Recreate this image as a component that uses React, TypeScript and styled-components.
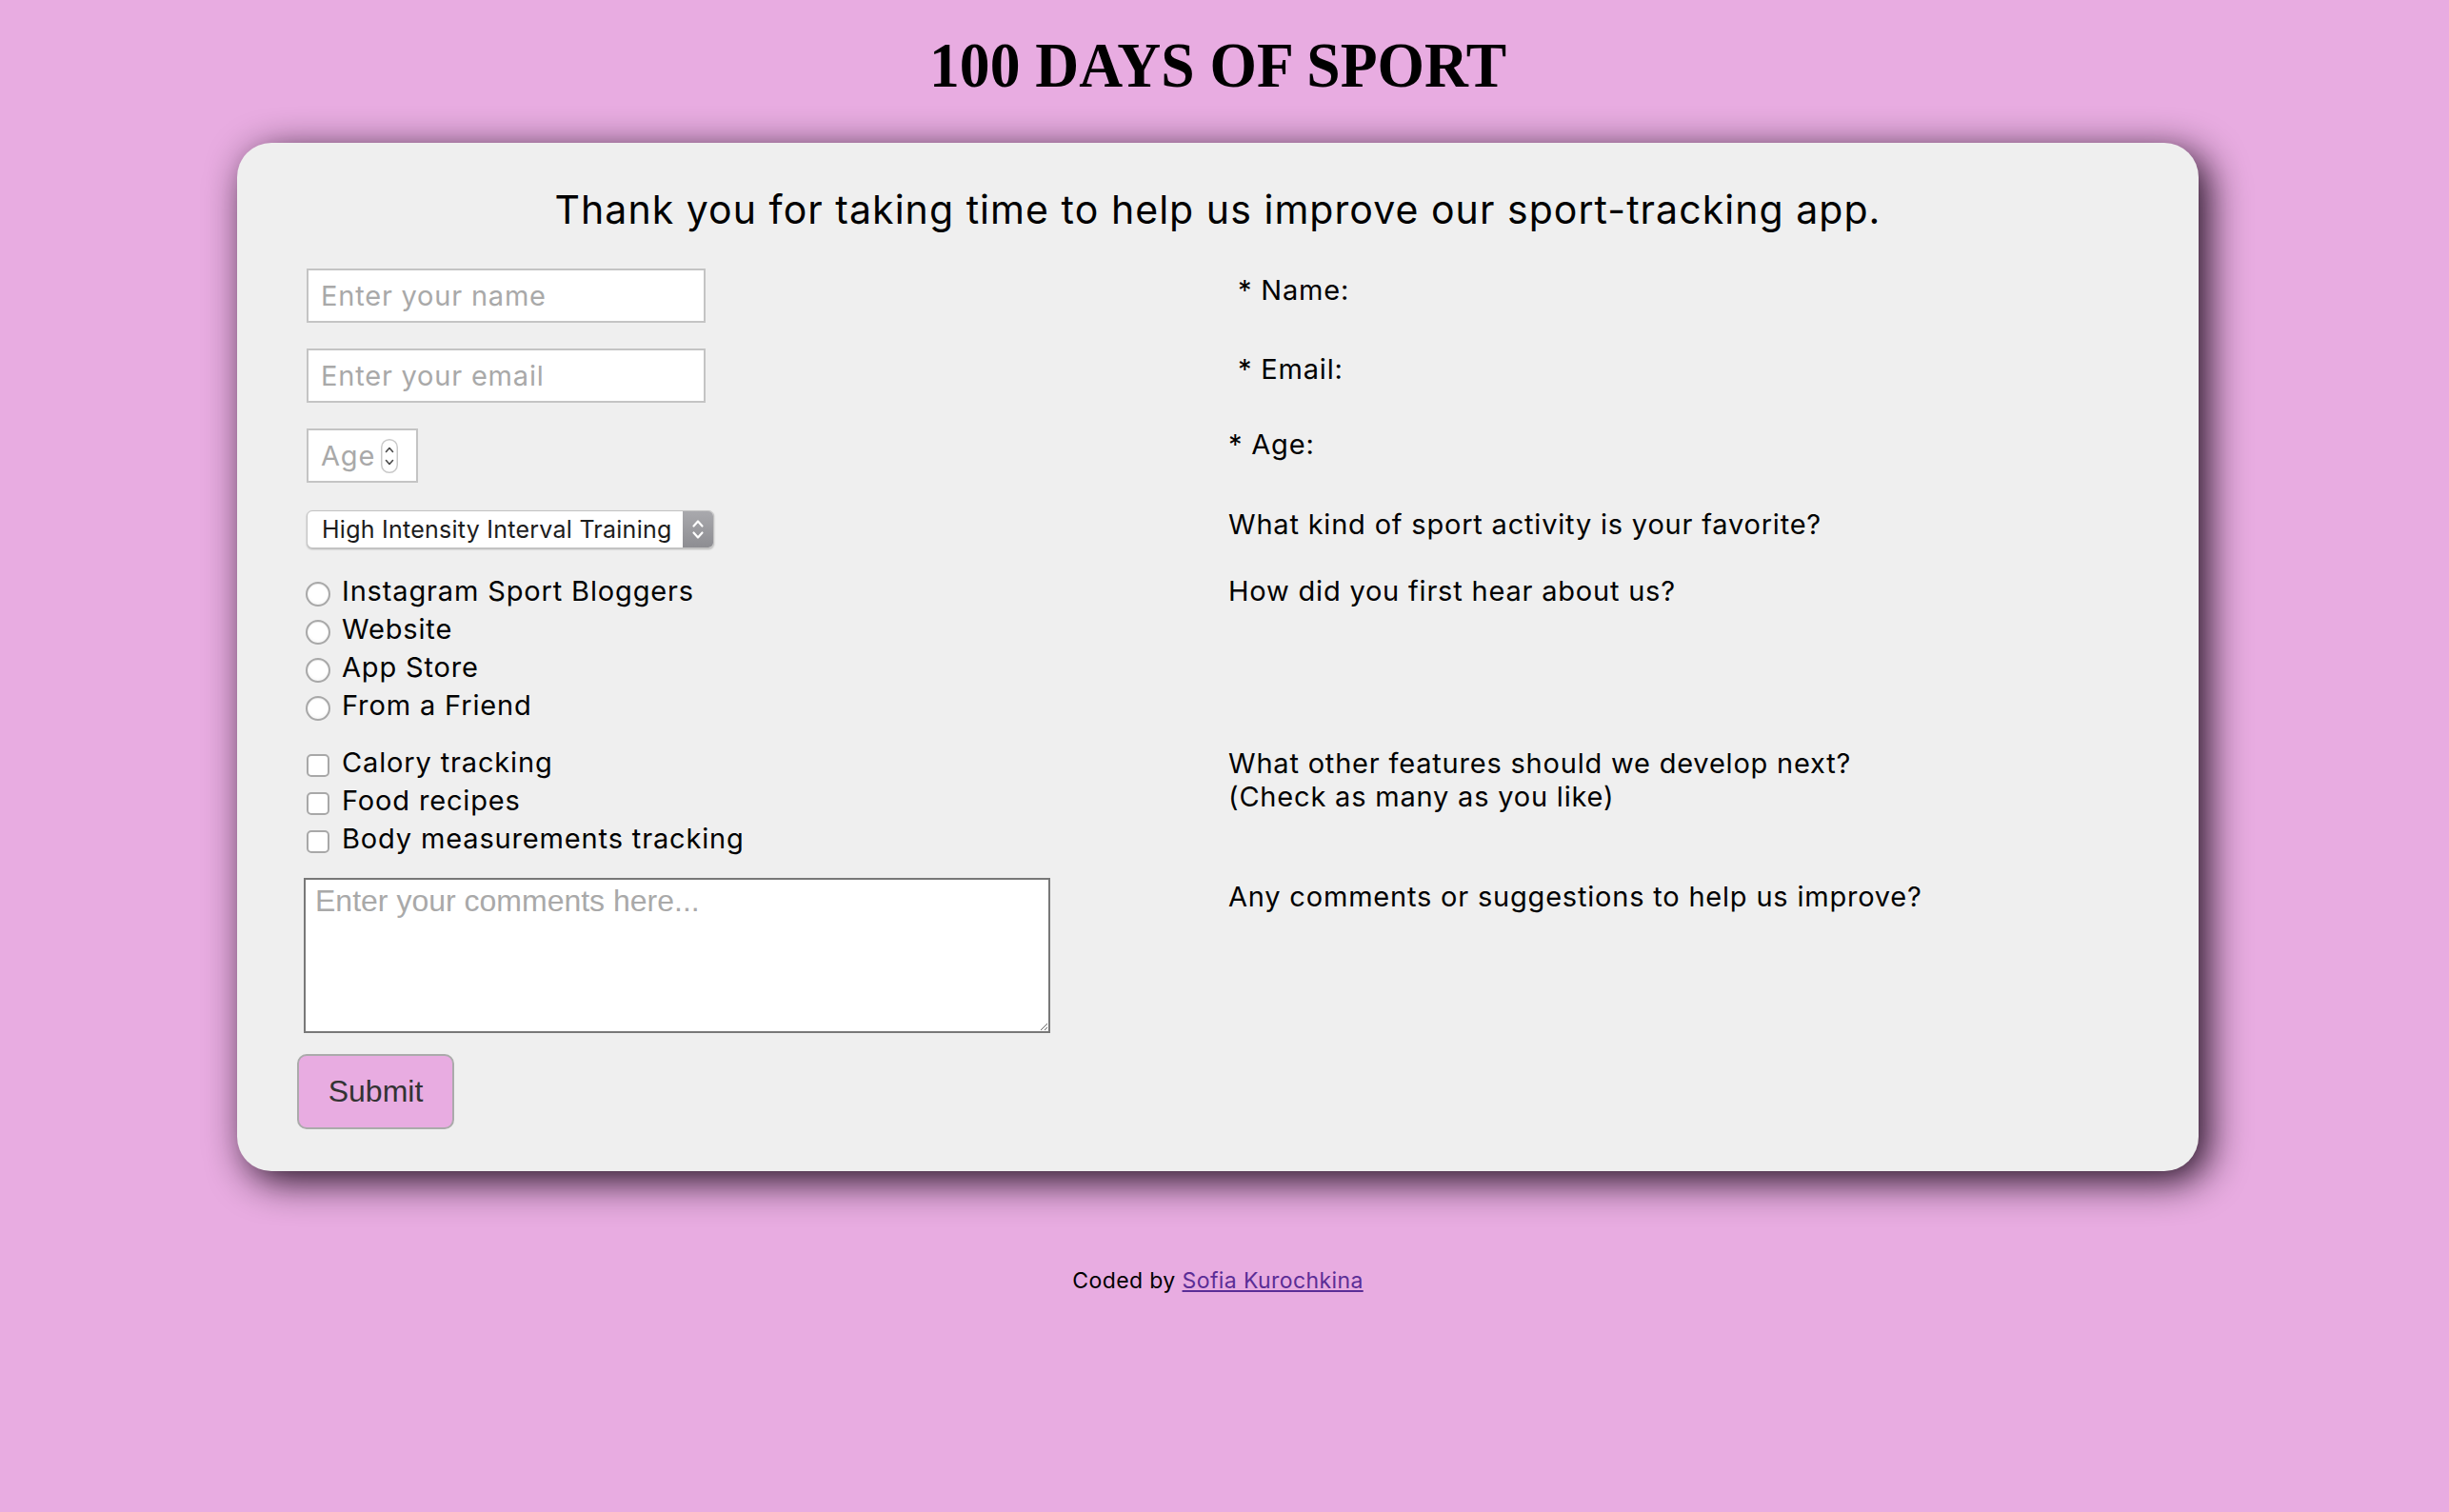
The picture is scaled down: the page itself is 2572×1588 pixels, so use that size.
import React from "react";
import styled, { createGlobalStyle } from "styled-components";

const Global = createGlobalStyle`
  html, body {
    margin: 0;
    padding: 0;
    background: #e8ace1;
  }
  body {
    font-family: Inter, "Noto Sans", sans-serif;
    color: #000;
  }
`;

const Page = styled.div`
  width: 2558px;
  min-height: 1588px;
  box-sizing: border-box;
  padding-top: 29px;
  display: flex;
  flex-direction: column;
  align-items: center;
`;

const Title = styled.h1`
  margin: 0;
  font-family: "Liberation Serif", "Times New Roman", serif;
  font-weight: 700;
  font-size: 68px;
  line-height: 78px;
  transform: scaleX(0.935);
  color: #000;
`;

const Card = styled.main`
  margin-top: 43px;
  width: 2060px;
  box-sizing: border-box;
  padding: 45px 73px 44px;
  background: #efefef;
  border-radius: 36px;
  box-shadow: 10px 10px 40px rgba(20, 5, 20, 0.95);
`;

const Lead = styled.h2`
  margin: 0;
  text-align: center;
  font-size: 41px;
  font-weight: 400;
  line-height: 50px;
  letter-spacing: 1.05px;
  color: #000;
`;

const Row = styled.div<{ $mt: number }>`
  display: grid;
  grid-template-columns: 968px 1fr;
  align-items: start;
  margin-top: ${(p) => p.$mt}px;
`;

const Cell = styled.div<{ $dy?: number; $dx?: number }>`
  display: flex;
  flex-direction: column;
  align-items: flex-start;
  margin-top: ${(p) => p.$dy ?? 0}px;
  margin-left: ${(p) => p.$dx ?? 0}px;
`;

const Label = styled.label<{ $indent?: boolean }>`
  font-size: 29px;
  line-height: 35px;
  letter-spacing: 0.8px;
  padding-left: ${(p) => (p.$indent ? 10 : 0)}px;
  color: #000;
`;

const TextInput = styled.input`
  box-sizing: border-box;
  width: 419px;
  height: 57px;
  margin: 0;
  border: 2px solid #c4c4c4;
  background: #fff;
  padding: 0 13px;
  font-family: Inter, "Noto Sans", sans-serif;
  font-size: 29px;
  letter-spacing: 0.8px;
  color: #000;
  outline: none;
  &::placeholder {
    color: #a9a9a9;
  }
`;

const AgeField = styled.div`
  box-sizing: border-box;
  width: 117px;
  height: 57px;
  border: 2px solid #c4c4c4;
  background: #fff;
  display: flex;
  align-items: center;
  gap: 6px;
  padding-left: 13px;
`;

const AgeInput = styled.input`
  width: 57px;
  border: none;
  padding: 0;
  margin: 0;
  background: transparent;
  font-family: Inter, "Noto Sans", sans-serif;
  font-size: 29px;
  letter-spacing: 0.8px;
  outline: none;
  -moz-appearance: textfield;
  &::placeholder {
    color: #a9a9a9;
  }
  &::-webkit-inner-spin-button,
  &::-webkit-outer-spin-button {
    -webkit-appearance: none;
    margin: 0;
  }
`;

const SelectBox = styled.div`
  display: flex;
  width: 428px;
  height: 40px;
  box-sizing: border-box;
  border: 1px solid #c2c2c2;
  border-radius: 6px;
  background: #fff;
  box-shadow: 0 1px 2px rgba(0, 0, 0, 0.25);
  overflow: hidden;
`;

const Select = styled.select`
  flex: 1;
  appearance: none;
  -webkit-appearance: none;
  border: none;
  background: transparent;
  font-family: Inter, "Noto Sans", sans-serif;
  font-size: 25px;
  letter-spacing: 0.25px;
  padding: 0 0 0 15px;
  margin: 0;
  color: #1c1c1c;
  outline: none;
`;

const ArrowBox = styled.div`
  width: 32px;
  background: linear-gradient(#a9a9ad, #8d8d92);
  display: flex;
  align-items: center;
  justify-content: center;
`;

const OptionList = styled.div`
  display: flex;
  flex-direction: column;
`;

const Option = styled.label<{ $gap: number }>`
  display: flex;
  align-items: flex-start;
  gap: ${(p) => p.$gap}px;
  height: 40px;
  font-size: 29px;
  line-height: 40px;
  letter-spacing: 0.85px;
  color: #000;
`;

const Radio = styled.input.attrs({ type: "radio" })`
  appearance: none;
  -webkit-appearance: none;
  margin: 10px 0 0 -1px;
  width: 26px;
  height: 26px;
  box-sizing: border-box;
  border-radius: 50%;
  border: 2px solid #a8a8a8;
  background: radial-gradient(circle at 50% 40%, #ffffff 55%, #ededed);
  box-shadow: inset 0 1px 1px rgba(0, 0, 0, 0.08);
  flex: none;
`;

const Check = styled.input.attrs({ type: "checkbox" })`
  appearance: none;
  -webkit-appearance: none;
  margin: 11px 0 0 0;
  width: 24px;
  height: 24px;
  box-sizing: border-box;
  border-radius: 5px;
  border: 2px solid #a8a8a8;
  background: #fff;
  flex: none;
`;

const TextArea = styled.textarea`
  display: block;
  box-sizing: border-box;
  width: 784px;
  height: 163px;
  margin: 0;
  border: 2px solid #787878;
  padding: 4px 10px;
  background: #fff;
  font-family: "Liberation Sans", Arial, sans-serif;
  font-size: 32px;
  resize: both;
  outline: none;
  &::placeholder {
    color: #a9a9a9;
  }
`;

const SubmitButton = styled.button`
  box-sizing: border-box;
  width: 165px;
  height: 79px;
  margin: 0;
  background: #e8ace1;
  border: 2px solid #ababab;
  border-radius: 10px;
  font-family: "Liberation Sans", Arial, sans-serif;
  font-size: 32px;
  color: #333;
  cursor: pointer;
`;

const Footer = styled.footer`
  margin-top: 101px;
  font-size: 23px;
  line-height: 28px;
  letter-spacing: 0.4px;
  color: #000;
  a {
    color: #5b2d96;
  }
`;

const Spinner = () => (
  <svg width="18" height="36" viewBox="0 0 18 36">
    <rect x="0.75" y="0.75" width="16.5" height="34.5" rx="8" fill="#fff" stroke="#c9c9c9" strokeWidth="1.5" />
    <path d="M5.5 13.5 L9 9.5 L12.5 13.5" fill="none" stroke="#4a4a4a" strokeWidth="1.6" strokeLinecap="round" strokeLinejoin="round" />
    <path d="M5.5 22.5 L9 26.5 L12.5 22.5" fill="none" stroke="#4a4a4a" strokeWidth="1.6" strokeLinecap="round" strokeLinejoin="round" />
  </svg>
);

const Chevrons = () => (
  <svg width="16" height="26" viewBox="0 0 16 26">
    <path d="M3.5 9.5 L8 4.5 L12.5 9.5" fill="none" stroke="#fff" strokeWidth="2.2" strokeLinecap="round" strokeLinejoin="round" />
    <path d="M3.5 16.5 L8 21.5 L12.5 16.5" fill="none" stroke="#fff" strokeWidth="2.2" strokeLinecap="round" strokeLinejoin="round" />
  </svg>
);

const sources = ["Instagram Sport Bloggers", "Website", "App Store", "From a Friend"];
const features = ["Calory tracking", "Food recipes", "Body measurements tracking"];

export default function App() {
  return (
    <>
      <Global />
      <Page>
        <Title>100 DAYS OF SPORT</Title>
        <Card>
          <Lead>Thank you for taking time to help us improve our sport-tracking app.</Lead>

          <Row $mt={37}>
            <Cell>
              <TextInput id="name" type="text" placeholder="Enter your name" />
            </Cell>
            <Cell $dy={5}>
              <Label htmlFor="name" $indent>* Name:</Label>
            </Cell>
          </Row>

          <Row $mt={27}>
            <Cell>
              <TextInput id="email" type="email" placeholder="Enter your email" />
            </Cell>
            <Cell $dy={4}>
              <Label htmlFor="email" $indent>* Email:</Label>
            </Cell>
          </Row>

          <Row $mt={26}>
            <Cell $dy={1}>
              <AgeField>
                <AgeInput id="age" type="number" placeholder="Age" />
                <Spinner />
              </AgeField>
            </Cell>
            <Cell>
              <Label htmlFor="age">* Age:</Label>
            </Cell>
          </Row>

          <Row $mt={26}>
            <Cell $dy={3}>
              <SelectBox>
                <Select id="sport" defaultValue="hiit">
                  <option value="hiit">High Intensity Interval Training</option>
                  <option value="yoga">Yoga</option>
                  <option value="running">Running</option>
                </Select>
                <ArrowBox>
                  <Chevrons />
                </ArrowBox>
              </SelectBox>
            </Cell>
            <Cell>
              <Label htmlFor="sport">What kind of sport activity is your favorite?</Label>
            </Cell>
          </Row>

          <Row $mt={25}>
            <Cell>
              <OptionList>
                {sources.map((s) => (
                  <Option key={s} $gap={12}>
                    <Radio name="source" value={s} />
                    <span>{s}</span>
                  </Option>
                ))}
              </OptionList>
            </Cell>
            <Cell $dy={2}>
              <Label>How did you first hear about us?</Label>
            </Cell>
          </Row>

          <Row $mt={20}>
            <Cell>
              <OptionList>
                {features.map((f) => (
                  <Option key={f} $gap={13}>
                    <Check name="features" value={f} />
                    <span>{f}</span>
                  </Option>
                ))}
              </OptionList>
            </Cell>
            <Cell $dy={3}>
              <Label>
                What other features should we develop next?
                <br />
                (Check as many as you like)
              </Label>
            </Cell>
          </Row>

          <Row $mt={21}>
            <Cell $dx={-3}>
              <TextArea id="comments" placeholder="Enter your comments here..." />
            </Cell>
            <Cell $dy={2}>
              <Label htmlFor="comments">Any comments or suggestions to help us improve?</Label>
            </Cell>
          </Row>

          <Row $mt={22}>
            <Cell $dx={-10}>
              <SubmitButton type="submit">Submit</SubmitButton>
            </Cell>
          </Row>
        </Card>
        <Footer>
          Coded by <a href="#">Sofia Kurochkina</a>
        </Footer>
      </Page>
    </>
  );
}
